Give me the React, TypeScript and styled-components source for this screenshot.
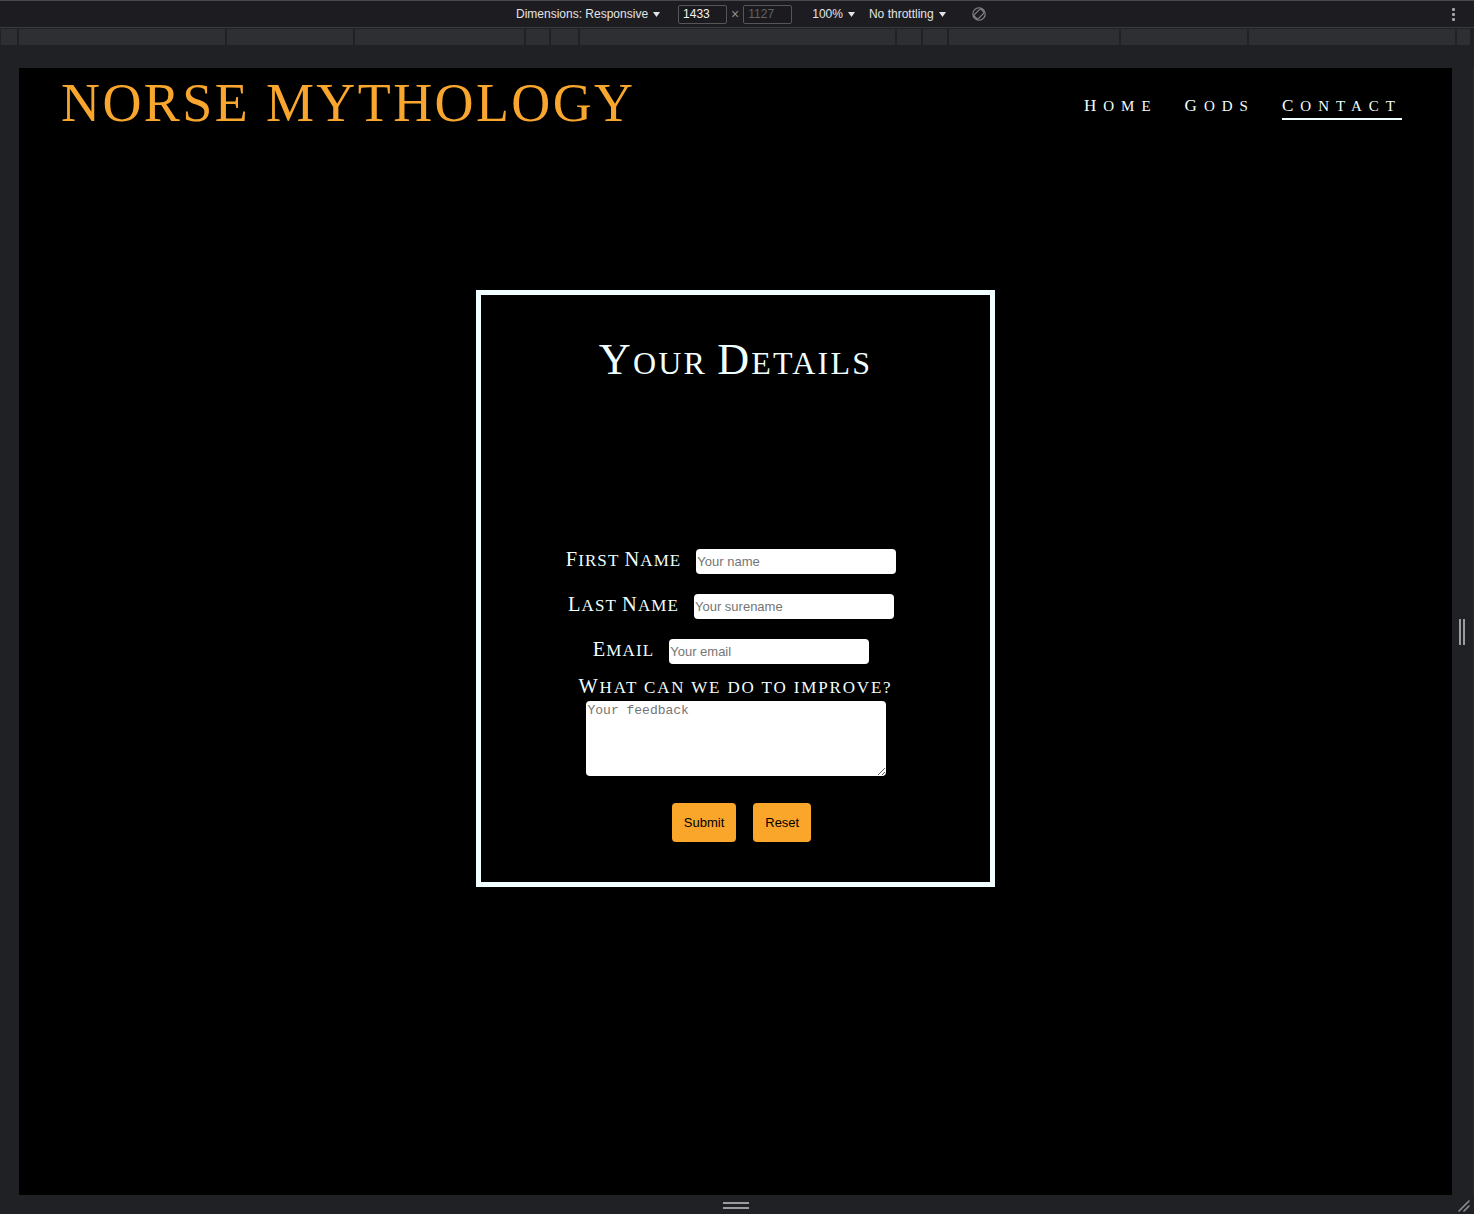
import React from "react";
import styled, { createGlobalStyle } from "styled-components";

const Global = createGlobalStyle`
  html, body { margin: 0; padding: 0; background: #202125; overflow: hidden; }
  #root { width: 1474px; height: 1214px; }
  * { box-sizing: border-box; }
`;

const Frame = styled.div`
  width: 1474px;
  height: 1214px;
  display: flex;
  flex-direction: column;
  background: #202125;
  font-family: "Liberation Sans", Arial, sans-serif;
`;

const Toolbar = styled.div`
  height: 28px;
  flex: none;
  border-top: 1px solid #4a4a4e;
  border-bottom: 1px solid #3c3c40;
  background: #1d1d21;
  display: flex;
  align-items: center;
  padding-left: 516px;
  padding-right: 19px;
  color: #e4e4e4;
  font-size: 12px;
`;

const ToolItem = styled.div<{ $ml?: number }>`
  display: flex;
  align-items: center;
  gap: 5px;
  margin-left: ${(p) => p.$ml ?? 0}px;
  white-space: nowrap;
`;

const SizeBox = styled.div<{ $dim?: boolean }>`
  width: 49px;
  height: 19px;
  border: 1px solid #55565a;
  border-radius: 2px;
  padding-left: 4px;
  display: flex;
  align-items: center;
  color: ${(p) => (p.$dim ? "#626266" : "#f2f2f2")};
  background: #1b1b1f;
  font-size: 12px;
`;

const Times = styled.span`
  color: #8d8d91;
  font-size: 14px;
  margin: 0 4px 0 4px;
`;

const Kebab = styled.div`
  margin-left: auto;
  display: flex;
  flex-direction: column;
  gap: 2px;
  span {
    width: 3px;
    height: 3px;
    border-radius: 1px;
    background: #a3a3a7;
  }
`;

const Ruler = styled.div`
  height: 16px;
  margin-top: 1px;
  flex: none;
  display: flex;
  gap: 2px;
  padding-left: 1px;
`;

const RulerSeg = styled.div<{ $w: number }>`
  width: ${(p) => p.$w}px;
  height: 100%;
  background: #2e2f33;
`;

const Gap = styled.div`
  height: 23px;
  flex: none;
`;

const Middle = styled.div`
  display: flex;
  height: 1127px;
  flex: none;
`;

const LeftGutter = styled.div`
  width: 19px;
  flex: none;
`;

const RightGutter = styled.div`
  width: 22px;
  flex: none;
  display: flex;
  align-items: center;
  padding-left: 7px;
  gap: 2px;
  border-right: 1px solid #2c2c30;
`;

const VLine = styled.span`
  width: 2px;
  height: 26px;
  background: #9b9b9f;
`;

const BottomBar = styled.div`
  height: 19px;
  flex: none;
  display: flex;
`;

const BottomCenter = styled.div`
  width: 1433px;
  margin-left: 19px;
  display: flex;
  flex-direction: column;
  align-items: center;
  padding-top: 7px;
  gap: 3px;
`;

const HLine = styled.span`
  width: 26px;
  height: 2px;
  background: #9b9b9f;
`;

const Corner = styled.div`
  width: 22px;
  display: flex;
  align-items: flex-end;
  justify-content: flex-end;
  padding: 0 4px 2px 0;
`;

/* ---------- page ---------- */

const Page = styled.div`
  width: 1433px;
  height: 1127px;
  background: #000;
  display: flex;
  flex-direction: column;
  overflow: hidden;
`;

const Header = styled.header`
  display: flex;
  justify-content: space-between;
  align-items: flex-start;
  padding: 8px 50px 0 42px;
`;

const Logo = styled.h1`
  margin: 0;
  font-family: "Liberation Serif", "Times New Roman", serif;
  font-weight: normal;
  font-size: 54px;
  line-height: 1;
  letter-spacing: 2.4px;
  color: #f8a62d;
`;

const Nav = styled.nav`
  display: flex;
  gap: 27px;
  margin-top: 21px;
`;

const serif = `"Liberation Serif", "Times New Roman", serif`;

const NavLink = styled.a<{ $active?: boolean }>`
  font-family: ${serif};
  font-size: 15px;
  line-height: 1;
  letter-spacing: 7px;
  color: #f0ffff;
  text-decoration: none;
  padding-bottom: 4px;
  border-bottom: 2px solid ${(p) => (p.$active ? "#f0ffff" : "transparent")};
`;

const Big = styled.span<{ $scale: number }>`
  font-size: ${(p) => p.$scale}em;
`;

const Caps = ({ text, scale }: { text: string; scale: number }) => {
  const parts = text.split(/([A-Z]+)/).filter(Boolean);
  return (
    <>
      {parts.map((p, i) =>
        /^[A-Z]+$/.test(p) ? (
          <Big key={i} $scale={scale}>
            {p}
          </Big>
        ) : (
          <React.Fragment key={i}>{p.toUpperCase()}</React.Fragment>
        )
      )}
    </>
  );
};

const Card = styled.section`
  align-self: center;
  margin-top: 160px;
  width: 519px;
  border: 5px solid #f0ffff;
  padding: 42px 0 40px;
  display: flex;
  flex-direction: column;
  align-items: center;
`;

const CardTitle = styled.h2`
  margin: 0 0 166px;
  height: 45px;
  display: flex;
  align-items: flex-end;
  font-family: ${serif};
  font-weight: normal;
  font-size: 32px;
  line-height: 1;
  letter-spacing: 2.2px;
  color: #f0ffff;
  white-space: pre;
`;

const Form = styled.form`
  display: flex;
  flex-direction: column;
  align-items: center;
`;

const Row = styled.div`
  display: flex;
  align-items: baseline;
  gap: 15px;
  height: 25px;
  margin-bottom: 20px;
  padding-right: 9px;
  &:nth-of-type(3) { margin-bottom: 12px; }
`;

const Label = styled.label`
  font-family: ${serif};
  font-size: 17px;
  line-height: 22px;
  letter-spacing: 1.1px;
  color: #f0ffff;
`;

const TextInput = styled.input`
  width: 200px;
  height: 25px;
  border: none;
  border-radius: 4px;
  padding: 0 1px;
  background: #fff;
  font-family: "Liberation Sans", Arial, sans-serif;
  font-size: 13px;
  color: #222;
  outline: none;
  &::placeholder { color: #757575; }
`;

const BlockLabel = styled(Label)`
  display: block;
  letter-spacing: 1.85px;
  margin-bottom: 2px;
`;

const Feedback = styled.textarea`
  width: 300px;
  height: 75px;
  border: none;
  border-radius: 4px;
  padding: 2px;
  background: #fff;
  font-family: "Liberation Mono", "Courier New", monospace;
  font-size: 13px;
  color: #222;
  outline: none;
  &::placeholder { color: #757575; }
`;

const Buttons = styled.div`
  display: flex;
  gap: 17px;
  margin-top: 27px;
  padding-left: 12px;
`;

const Btn = styled.button`
  height: 39px;
  padding: 0 12px;
  border: none;
  border-radius: 4px;
  background: #f9a62b;
  color: #000;
  font-family: "Liberation Sans", Arial, sans-serif;
  font-size: 13px;
  cursor: pointer;
`;

const Caret = () => (
  <svg width="7" height="5" viewBox="0 0 7 5">
    <path d="M0 0 H7 L3.5 5 Z" fill="#e4e4e4" />
  </svg>
);

const RotateIcon = () => (
  <svg width="14" height="14" viewBox="0 0 14 14" fill="none" stroke="#8a8a8e" strokeWidth="1.1">
    <circle cx="7" cy="7" r="6.2" />
    <rect x="4.2" y="2.2" width="5.6" height="9.6" rx="1" transform="rotate(45 7 7)" />
  </svg>
);

const rulerWidths = [16, 206, 126, 169, 23, 27, 315, 24, 24, 170, 126, 206, 13];

export default function App() {
  return (
    <>
      <Global />
      <Frame>
        <Toolbar>
          <ToolItem>
            Dimensions: Responsive <Caret />
          </ToolItem>
          <ToolItem $ml={18}>
            <SizeBox>1433</SizeBox>
          </ToolItem>
          <Times>×</Times>
          <SizeBox $dim>1127</SizeBox>
          <ToolItem $ml={20}>
            100% <Caret />
          </ToolItem>
          <ToolItem $ml={14}>
            No throttling <Caret />
          </ToolItem>
          <ToolItem $ml={26}>
            <RotateIcon />
          </ToolItem>
          <Kebab>
            <span />
            <span />
            <span />
          </Kebab>
        </Toolbar>
        <Ruler>
          {rulerWidths.map((w, i) => (
            <RulerSeg key={i} $w={w} />
          ))}
        </Ruler>
        <Gap />
        <Middle>
          <LeftGutter />
          <Page>
            <Header>
              <Logo>NORSE MYTHOLOGY</Logo>
              <Nav>
                <NavLink href="#">
                  <Caps text="Home" scale={1.14} />
                </NavLink>
                <NavLink href="#">
                  <Caps text="Gods" scale={1.14} />
                </NavLink>
                <NavLink href="#" $active>
                  <Caps text="Contact" scale={1.14} />
                </NavLink>
              </Nav>
            </Header>
            <Card>
              <CardTitle>
                <span>
                  <Caps text="Your Details" scale={1.38} />
                </span>
              </CardTitle>
              <Form onSubmit={(e) => e.preventDefault()}>
                <Row>
                  <Label htmlFor="fn">
                    <Caps text="First Name" scale={1.2} />
                  </Label>
                  <TextInput id="fn" placeholder="Your name" />
                </Row>
                <Row>
                  <Label htmlFor="ln">
                    <Caps text="Last Name" scale={1.2} />
                  </Label>
                  <TextInput id="ln" placeholder="Your surename" />
                </Row>
                <Row>
                  <Label htmlFor="em">
                    <Caps text="Email" scale={1.2} />
                  </Label>
                  <TextInput id="em" placeholder="Your email" />
                </Row>
                <BlockLabel htmlFor="fb">
                  <Caps text="What can we do to improve?" scale={1.2} />
                </BlockLabel>
                <Feedback id="fb" placeholder="Your feedback" />
                <Buttons>
                  <Btn type="submit">Submit</Btn>
                  <Btn type="reset">Reset</Btn>
                </Buttons>
              </Form>
            </Card>
          </Page>
          <RightGutter>
            <VLine />
            <VLine />
          </RightGutter>
        </Middle>
        <BottomBar>
          <BottomCenter>
            <HLine />
            <HLine />
          </BottomCenter>
          <Corner>
            <svg width="13" height="13" viewBox="0 0 13 13" stroke="#8e8e92" strokeWidth="1.6" strokeLinecap="round">
              <line x1="2" y1="12" x2="12" y2="2" />
              <line x1="7" y1="12" x2="12" y2="7" />
            </svg>
          </Corner>
        </BottomBar>
      </Frame>
    </>
  );
}
